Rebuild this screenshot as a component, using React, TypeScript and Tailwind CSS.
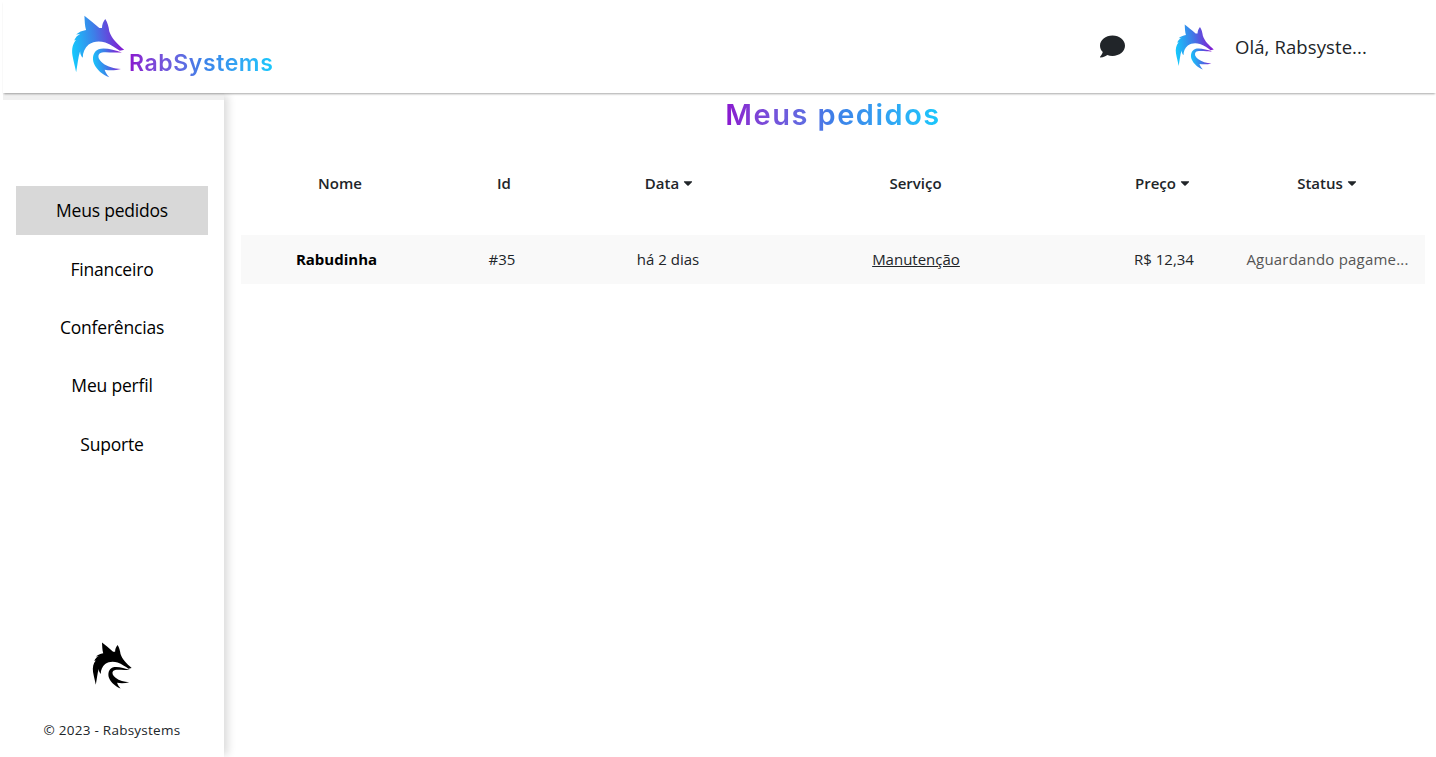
import React from 'react';
import { FaCaretDown, FaComment } from 'react-icons/fa';

const font = { fontFamily: '"Open Sans", "Noto Sans", sans-serif' };

// raposa do logo, desenhada numa caixa 165x190
const FoxLogo = ({ id, mono, className }: { id: string; mono?: boolean; className?: string }) => (
  <svg viewBox="0 0 165 190" className={className}>
    <defs>
      <linearGradient id={id} x1="0" y1="0.6" x2="1" y2="0.45">
        <stop offset="0" stopColor="#16c8fc" />
        <stop offset="0.45" stopColor="#3d7fe8" />
        <stop offset="1" stopColor="#8a12cf" />
      </linearGradient>
    </defs>
    <g fill={mono ? '#000' : `url(#${id})`} transform="translate(-65 -43)">
      {/* cabeca e pelo do lado esquerdo */}
      <path d="M105 45 C118 56 135 68 150 82 L158 82 C158 72 162 62 168 55 C175 65 178 78 180 92 C186 112 205 132 225 148 L212 151 C200 143 185 132 168 126 C150 120 132 122 118 132 C106 142 100 156 100 172 C95 166 92 160 92 152 C86 170 84 195 80 216 C76 195 72 182 69 165 C66 145 70 130 80 118 L74 120 C78 110 84 104 92 100 L80 102 C88 94 98 90 110 88 C106 75 106 60 105 45 Z" />
      {/* boca */}
      <path d="M218 156 C195 148 165 140 148 146 C132 152 127 172 134 190 C142 208 160 224 180 231 C172 222 168 215 166 208 C182 211 200 210 215 206 C195 205 175 200 160 188 C148 178 144 168 150 160 C158 152 178 156 195 156 C205 156 212 157 218 156 Z" />
    </g>
  </svg>
);

const navItems = ['Meus pedidos', 'Financeiro', 'Conferências', 'Meu perfil', 'Suporte'];

const HeaderCell = ({ label, sort, className }: { label: string; sort?: boolean; className: string }) => (
  <div className={`flex items-center justify-center gap-1 text-[15px] font-semibold text-[#212529] ${className}`}>
    {label}
    {sort && <FaCaretDown className="w-[10px] h-[14px] text-[#212529]" />}
  </div>
);

export default function App() {
  return (
    <div className="w-[1436px] h-[757px] overflow-hidden bg-white flex flex-col" style={font}>
      <header className="relative z-20 h-[93px] shrink-0 ml-[3px] bg-white shadow-[0_2px_2px_-1px_rgba(0,0,0,0.35)] flex items-center">
        <div className="relative ml-[68px] w-[205px] h-[93px]">
          <FoxLogo id="fox-top" className="absolute left-0 top-[15px] w-[55px] h-[63px]" />
          <span
            className="absolute left-[58px] top-[49px] text-[23px] leading-[28px] font-semibold tracking-[0.6px] bg-gradient-to-r from-[#8a12cf] via-[#3d7fe8] to-[#16c8fc] bg-clip-text text-transparent"
            style={{ fontFamily: 'Inter, sans-serif' }}
          >
            RabSystems
          </span>
        </div>
        <div className="ml-auto flex items-center mr-[69px]">
          <FaComment className="w-[25px] h-[25px] text-[#212529]" />
          <FoxLogo id="fox-user" className="ml-[50px] w-[40px] h-[46px]" />
          <span className="ml-[20px] text-[18.5px] font-medium tracking-[0.1px] text-[#212529]">Olá, Rabsyste...</span>
        </div>
      </header>

      <div className="flex flex-1 min-h-0">
        <aside className="relative z-10 ml-[3px] w-[221px] shrink-0 bg-white shadow-[6px_0_8px_-2px_rgba(0,0,0,0.14)] flex flex-col items-center">
          <div className="w-full h-[7px] shrink-0 bg-[#f0f0f0]" />
          <nav className="mt-[86px] w-[192px] self-start ml-[13px] flex flex-col gap-[9.300px]">
            {navItems.map((item, i) => (
              <div
                key={item}
                className={`h-[49px] flex items-center justify-center text-[17.5px] tracking-[-0.2px] text-black ${i === 0 ? 'bg-[#d8d8d8]' : ''}`}
              >
                {item}
              </div>
            ))}
          </nav>
          <FoxLogo id="fox-bottom" mono className="mt-auto -ml-[3px] w-[41px] h-[47px]" />
          <div className="mt-[31px] mb-[17px] -ml-[3px] text-[13.5px] tracking-[0.25px] text-[#212529]">© 2023 - Rabsystems</div>
        </aside>

        <main className="flex-1 min-w-0 pl-[17px] pr-[11px]">
          <h1 className="mt-[3px] text-center leading-[36px] text-[29px] font-semibold">
            <span
              className="tracking-[1.5px] bg-gradient-to-r from-[#8a12cf] via-[#3d7fe8] to-[#16c8fc] bg-clip-text text-transparent"
              style={{ fontFamily: 'Inter, sans-serif' }}
            >
              Meus pedidos
            </span>
          </h1>

          <div className="mt-[32px] flex h-[36px]">
            <HeaderCell label="Nome" className="w-[198px]" />
            <HeaderCell label="Id" className="w-[130px]" />
            <HeaderCell label="Data" sort className="w-[200px]" />
            <HeaderCell label="Serviço" className="w-[293px]" />
            <HeaderCell label="Preço" sort className="w-[201px]" />
            <HeaderCell label="Status" sort className="w-[128px]" />
          </div>

          <div className="mt-[34px] h-[49px] bg-[#f9f9f9] flex items-center text-[15px] text-[#212529]">
            <div className="w-[191px] text-center font-bold text-black">Rabudinha</div>
            <div className="w-[140px] text-center font-medium">#35</div>
            <div className="w-[192px] text-center">há 2 dias</div>
            <div className="w-[304px] text-center underline">Manutenção</div>
            <div className="w-[172px] pl-[20px] text-center">R$ 12,34</div>
            <div className="w-[175px] text-center text-[#555] tracking-[0.2px] truncate">Aguardando pagame...</div>
          </div>
        </main>
      </div>
    </div>
  );
}
